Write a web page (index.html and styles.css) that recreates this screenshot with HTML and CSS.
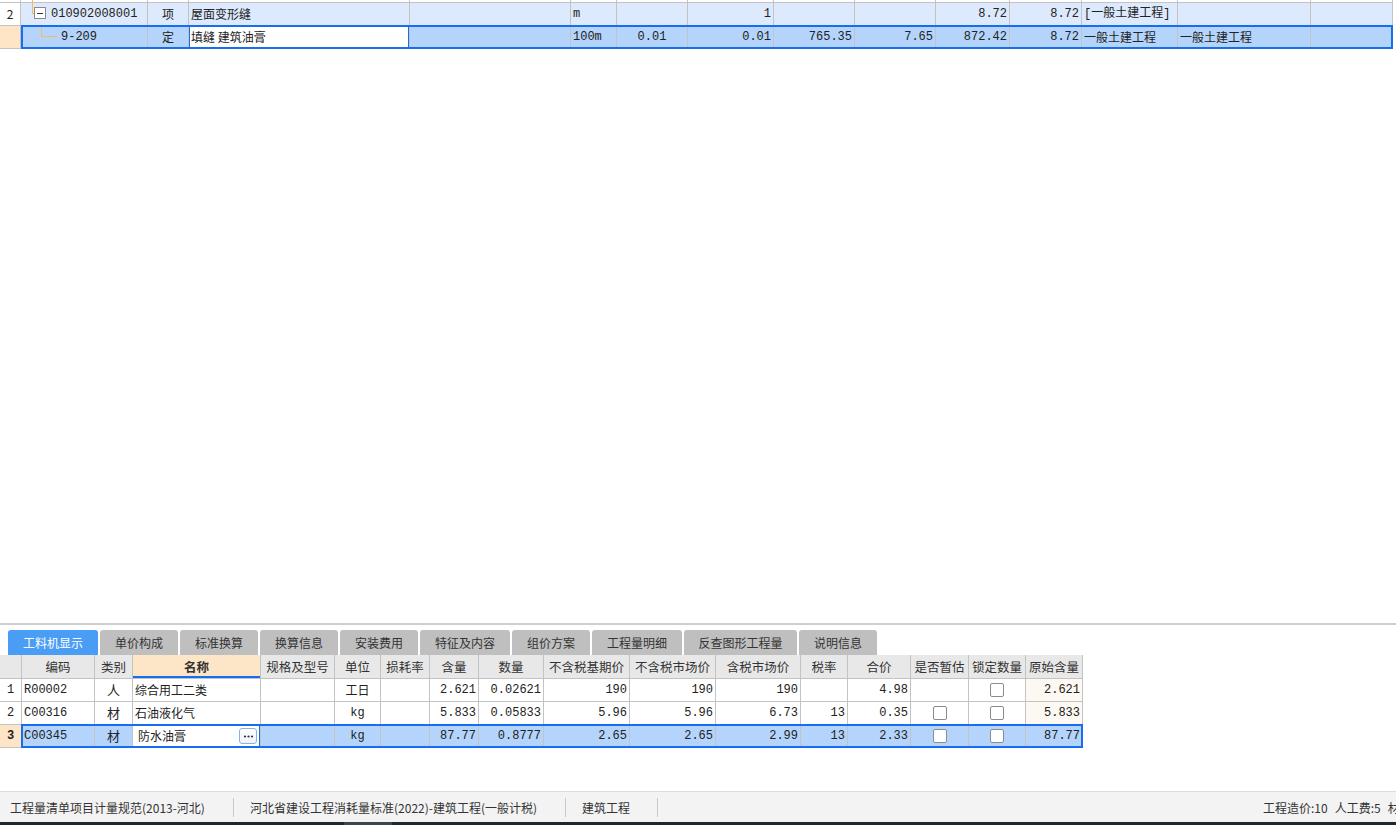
FILE: index.html
```html
<!DOCTYPE html>
<html lang="zh-CN">
<head>
<meta charset="utf-8">
<title>工料机显示</title>
<link rel="stylesheet" href="styles.css">
</head>
<body>
<div class="app">
  <div class="main">
    <div class="tgrid">
      <div class="trow partial">
        <div class="c"></div>
        <div class="c code"><span class="vline"></span></div>
        <div class="c"></div><div class="c"></div><div class="c"></div><div class="c"></div><div class="c"></div><div class="c"></div><div class="c"></div><div class="c"></div><div class="c"></div><div class="c"></div><div class="c"></div><div class="c"></div><div class="c"></div>
      </div>
      <div class="trow r1">
        <div class="c num ctr">2</div>
        <div class="c code mono">
          <svg class="tree t1" width="30" height="22" viewBox="0 0 30 22">
            <path d="M11.5 0 V10.5 H14" stroke="#f6ba5c" fill="none" shape-rendering="crispEdges"/>
            <rect x="13.5" y="4.5" width="11" height="11" fill="#fff" stroke="#8a8a8a" shape-rendering="crispEdges"/>
            <path d="M16 10.5 H22" stroke="#333" shape-rendering="crispEdges"/>
          </svg>010902008001</div>
        <div class="c ctr">项</div>
        <div class="c">屋面变形缝</div>
        <div class="c"></div>
        <div class="c mono">m</div>
        <div class="c"></div>
        <div class="c mono rt">1</div>
        <div class="c"></div>
        <div class="c"></div>
        <div class="c mono rt">8.72</div>
        <div class="c mono rt">8.72</div>
        <div class="c mono">[一般土建工程]</div>
        <div class="c"></div>
        <div class="c"></div>
      </div>
      <div class="trow r2 sel">
        <div class="c num cur"></div>
        <div class="c code mono">
          <svg class="tree t2" width="40" height="22" viewBox="0 0 40 22">
            <path d="M20.5 0 V10.5 H36" stroke="#f6ba5c" fill="none" shape-rendering="crispEdges"/>
          </svg>9-209</div>
        <div class="c ctr">定</div>
        <div class="c edit">填缝 建筑油膏</div>
        <div class="c"></div>
        <div class="c mono">100m</div>
        <div class="c mono ctr">0.01</div>
        <div class="c mono rt">0.01</div>
        <div class="c mono rt">765.35</div>
        <div class="c mono rt">7.65</div>
        <div class="c mono rt">872.42</div>
        <div class="c mono rt">8.72</div>
        <div class="c">一般土建工程</div>
        <div class="c">一般土建工程</div>
        <div class="c"></div>
      </div>
    </div>
  </div>
  <div class="divider"></div>
  <div class="panel">
    <div class="tabs">
      <div class="tab active w90">工料机显示</div>
      <div class="tab w78">单价构成</div>
      <div class="tab w78">标准换算</div>
      <div class="tab w78">换算信息</div>
      <div class="tab w78">安装费用</div>
      <div class="tab w90">特征及内容</div>
      <div class="tab w78">组价方案</div>
      <div class="tab w90">工程量明细</div>
      <div class="tab w113">反查图形工程量</div>
      <div class="tab w78">说明信息</div>
    </div>
    <div class="bgrid">
      <div class="brow head">
        <div class="c"></div>
        <div class="c ctr">编码</div>
        <div class="c ctr">类别</div>
        <div class="c ctr hname">名称</div>
        <div class="c ctr">规格及型号</div>
        <div class="c ctr">单位</div>
        <div class="c ctr">损耗率</div>
        <div class="c ctr">含量</div>
        <div class="c ctr">数量</div>
        <div class="c ctr">不含税基期价</div>
        <div class="c ctr">不含税市场价</div>
        <div class="c ctr">含税市场价</div>
        <div class="c ctr">税率</div>
        <div class="c ctr">合价</div>
        <div class="c ctr">是否暂估</div>
        <div class="c ctr">锁定数量</div>
        <div class="c ctr">原始含量</div>
      </div>
      <div class="brow">
        <div class="c mono ctr">1</div>
        <div class="c mono">R00002</div>
        <div class="c ctr big">人</div>
        <div class="c">综合用工二类</div>
        <div class="c"></div>
        <div class="c ctr">工日</div>
        <div class="c"></div>
        <div class="c mono rt">2.621</div>
        <div class="c mono rt">0.02621</div>
        <div class="c mono rt">190</div>
        <div class="c mono rt">190</div>
        <div class="c mono rt">190</div>
        <div class="c"></div>
        <div class="c mono rt">4.98</div>
        <div class="c"></div>
        <div class="c ctr"><span class="cb"></span></div>
        <div class="c mono rt orig">2.621</div>
      </div>
      <div class="brow">
        <div class="c mono ctr">2</div>
        <div class="c mono">C00316</div>
        <div class="c ctr big">材</div>
        <div class="c">石油液化气</div>
        <div class="c"></div>
        <div class="c mono ctr">kg</div>
        <div class="c"></div>
        <div class="c mono rt">5.833</div>
        <div class="c mono rt">0.05833</div>
        <div class="c mono rt">5.96</div>
        <div class="c mono rt">5.96</div>
        <div class="c mono rt">6.73</div>
        <div class="c mono rt">13</div>
        <div class="c mono rt">0.35</div>
        <div class="c ctr"><span class="cb"></span></div>
        <div class="c ctr"><span class="cb"></span></div>
        <div class="c mono rt orig">5.833</div>
      </div>
      <div class="brow sel">
        <div class="c mono ctr cur bold">3</div>
        <div class="c mono">C00345</div>
        <div class="c ctr big">材</div>
        <div class="c edit bedit"><span class="etext">防水油膏</span><span class="more"><svg width="15" height="13" viewBox="0 0 15 13"><circle cx="4" cy="6.5" r="1.1" fill="#333"/><circle cx="7.5" cy="6.5" r="1.1" fill="#333"/><circle cx="11" cy="6.5" r="1.1" fill="#333"/></svg></span></div>
        <div class="c"></div>
        <div class="c mono ctr">kg</div>
        <div class="c"></div>
        <div class="c mono rt">87.77</div>
        <div class="c mono rt">0.8777</div>
        <div class="c mono rt">2.65</div>
        <div class="c mono rt">2.65</div>
        <div class="c mono rt">2.99</div>
        <div class="c mono rt">13</div>
        <div class="c mono rt">2.33</div>
        <div class="c ctr"><span class="cb"></span></div>
        <div class="c ctr"><span class="cb"></span></div>
        <div class="c mono rt">87.77</div>
      </div>
    </div>
  </div>
  <div class="status">
    <div class="sitem s1">工程量清单项目计量规范(2013-河北)</div>
    <div class="sep"></div>
    <div class="sitem s2">河北省建设工程消耗量标准(2022)-建筑工程(一般计税)</div>
    <div class="sep"></div>
    <div class="sitem s3">建筑工程</div>
    <div class="sep"></div>
    <div class="sright"><span>工程造价:10</span><span>人工费:5</span><span>材料费:3</span></div>
  </div>
  <div class="taskbar"><span class="tb-seg"></span></div>
</div>
</body>
</html>
```

FILE: styles.css
```css
*, *::before, *::after { box-sizing: border-box; }
html, body { margin: 0; padding: 0; background: #fff; }
body {
  width: 1396px;
  height: 825px;
  overflow: hidden;
  font-family: "Noto Sans CJK SC", "Noto Sans", sans-serif;
  font-size: 12px;
  color: #222;
}
.app { display: flex; flex-direction: column; height: 825px; }

/* top grid */
.main { height: 623px; flex: none; }
.tgrid { width: 1393px; }
.trow {
  display: grid;
  grid-template-columns: 21px 127px 41px 221px 161px 46px 71px 86px 81px 81px 74px 72px 96px 133px 82px;
  height: 23px;
  position: relative;
}
.trow.partial { height: 3px; }
.c {
  border-right: 1px solid #c3c3c3;
  border-bottom: 1px solid #c3c3c3;
  display: flex;
  align-items: center;
  padding: 0 2px;
  white-space: nowrap;
  overflow: hidden;
  line-height: 16px;
  position: relative;
}
.ctr { justify-content: center; }
.rt { justify-content: flex-end; }
.mono { font-family: "Liberation Mono", "Noto Sans CJK SC", monospace; font-size: 12px; }
.trow.r1 .c { background: #dde9fc; }
.trow.r1 .c.num { background: #fff; }
.trow.r2 .c { background: #b4d4fc; }
.trow .c.cur, .brow .c.cur { background: #fde5c6; }
.trow.partial .code { overflow: visible; }
.vline { position: absolute; left: 11px; top: 0; width: 1px; height: 3px; background: #f6ba5c; }
.code { padding: 0; }
.tree { flex: none; display: block; }

.sel::after {
  content: "";
  position: absolute;
  left: 21px;
  top: -1px;
  bottom: 0;
  border: 2px solid #156ef0;
  pointer-events: none;
  z-index: 2;
}
.trow.sel::after { width: 1372px; }
.trow.r2 .c.edit { background: #fff; }
.c.edit::after {
  content: "";
  position: absolute;
  left: -1px; right: -1px; top: -1px; bottom: -1px;
  border-left: 2px solid #156ef0;
  border-right: 2px solid #156ef0;
  pointer-events: none;
}

/* divider + panel */
.divider { height: 2px; background: #cecece; flex: none; }
.panel { flex: none; height: 166px; padding-top: 5px; display: flex; flex-direction: column; }
.tabs { display: flex; gap: 2px; padding-left: 8px; height: 25px; flex: none; }
.tab {
  height: 25px;
  border-radius: 3px 3px 0 0;
  background: #bfbfbf;
  color: #333;
  display: flex;
  align-items: center;
  justify-content: center;
  font-size: 12px;
  flex: none;
}
.tab.active { background: #4a9df4; color: #fff; }
.w78 { width: 78px; }
.w90 { width: 90px; }
.w113 { width: 113px; }

/* bottom grid */
.bgrid { width: 1083px; }
.brow {
  display: grid;
  grid-template-columns: 22px 73px 38px 128px 74px 46px 49px 49px 65px 86px 86px 85px 47px 63px 58px 57px 57px;
  height: 23px;
  position: relative;
}
.brow.head { height: 24px; }
.brow.head .c { background: #e8e8e8; color: #333; font-size: 12.5px; }
.brow.head .c.hname { background: #fde6c8; font-weight: bold; box-shadow: inset 0 -2px 0 #156ef0; }
.big { font-size: 13px; }
.bold { font-weight: bold; }
.orig { background: #fdf8f2; }
.brow.sel .c { background: #b4d4fc; }
.brow.sel .c.cur { background: #fde5c6; }
.brow.sel::after { width: 1062px; }
.brow.sel .c.bedit { background: #fff; padding: 0 2px 0 5px; justify-content: space-between; }
.c.bedit::after { border-left-width: 1px; border-right-width: 2px; left: -1px; }
.etext { color: #222; }
.more {
  width: 18px;
  height: 16px;
  border: 1px solid #8fb0dc;
  border-radius: 3px;
  background: linear-gradient(#fff, #eef3fa);
  display: flex;
  align-items: center;
  justify-content: center;
  flex: none;
  margin-right: 1px;
}
.more svg { display: block; }
.cb {
  width: 14px;
  height: 14px;
  border: 1px solid #8c8c8c;
  border-radius: 2px;
  background: #fff;
  display: block;
}

/* status bar */
.status {
  flex: none;
  height: 31px;
  border-top: 1px solid #dcdcdc;
  background: #f3f3f3;
  display: flex;
  align-items: center;
  white-space: nowrap;
  overflow: hidden;
  color: #333;
  font-size: 12px;
}
.sitem { height: 100%; display: flex; align-items: center; flex: none; }
.s1 { width: 233px; padding-left: 10px; }
.s2 { width: 331px; padding-left: 16px; }
.s3 { width: 91px; padding-left: 16px; }
.sep { width: 1px; height: 19px; background: #c9c9c9; flex: none; }
.sright {
  margin-left: auto;
  width: 133px;
  overflow: hidden;
  display: flex;
  gap: 7px;
  flex: none;
}
.sright span { flex: none; }
.taskbar { flex: none; height: 3px; background: #1c2730; position: relative; }
.tb-seg { position: absolute; left: 344px; top: 0; width: 48px; height: 3px; background: #3b464f; }
```
